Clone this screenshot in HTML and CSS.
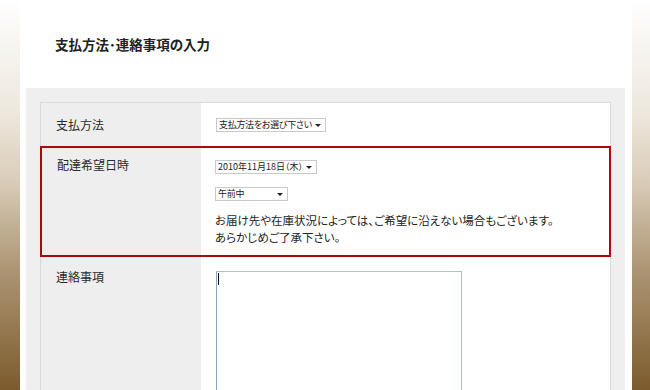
FILE: index.html
```html
<!DOCTYPE html>
<html lang="ja">
<head>
<meta charset="utf-8">
<title>支払方法・連絡事項の入力</title>
<link rel="stylesheet" href="styles.css">
</head>
<body>
<div class="page">
  <div class="strip strip-left"></div>
  <main class="main">
    <header class="head">
      <h1 class="title">支払方法･連絡事項の入力</h1>
    </header>
    <section class="panel">
      <div class="form">
        <div class="row row-first">
          <div class="label">支払方法</div>
          <div class="value">
            <span class="select sel-pay">支払方法をお選び下さい<i class="arrow"></i></span>
          </div>
        </div>
        <div class="row row-alert">
          <div class="label">配達希望日時</div>
          <div class="value">
            <span class="select sel-date">2010年11月18日（木）<i class="arrow"></i></span>
            <span class="select sel-time">午前中<i class="arrow"></i></span>
            <p class="note">お届け先や在庫状況によっては、ご希望に沿えない場合もございます。<br>あらかじめご了承下さい。</p>
          </div>
        </div>
        <div class="row row-last">
          <div class="label">連絡事項</div>
          <div class="value">
            <div class="textarea"><span class="caret"></span></div>
          </div>
        </div>
      </div>
    </section>
  </main>
  <div class="strip strip-right"></div>
</div>
</body>
</html>
```
FILE: styles.css
```css
html, body {
  margin: 0;
  padding: 0;
  background: #fff;
}
body {
  font-family: "Noto Sans CJK JP", "Noto Sans", sans-serif;
  color: #333;
  height: 390px;
  overflow: hidden;
}
.page {
  display: flex;
  width: 650px;
  min-height: 390px;
}
.strip {
  flex: none;
  min-height: 390px;
}
.strip-left {
  width: 20px;
  background: linear-gradient(to bottom, #ffffff 0px, #f8f6f2 40px, #eee8de 110px, #dacdb9 180px, #ad9573 270px, #7c5b2d 390px);
}
.strip-right {
  width: 18px;
  background: linear-gradient(to bottom, #ffffff 0px, #f8f6f2 40px, #eee8de 110px, #dacdb9 180px, #ad9573 270px, #7c5b2d 390px);
}
.main {
  flex: 1;
  padding: 0 7px 0 6px;
}
.head {
  height: 88px;
  display: flex;
  align-items: flex-start;
}
.title {
  margin: 34px 0 0 29px;
  font-size: 13.5px;
  line-height: 20px;
  font-weight: bold;
  color: #222;
  font-feature-settings: "palt";
}
.panel {
  background: #efefef;
  padding: 14px 14px 0 14px;
  height: 400px;
}
.form {
  background: #fff;
  border: 1px solid #dadada;
  border-bottom: none;
  height: 400px;
}
.row {
  display: grid;
  grid-template-columns: 160px 1fr;
}
.label {
  background: #eeeeee;
  padding-left: 15px;
  font-size: 12px;
  line-height: 16px;
  color: #2a2a2a;
}
.value {
  padding-left: 15px;
}
.row-first {
  height: 43px;
}
.row-first .label {
  padding-top: 14px;
}
.row-first .value {
  padding-top: 15px;
}
.row-alert {
  border: 2px solid #aa0a0a;
  margin: 0 -1px;
  grid-template-columns: 159px 1fr;
}
.row-alert .label {
  padding-top: 9px;
}
.row-alert .value {
  padding-top: 12px;
  padding-bottom: 9px;
  padding-left: 14px;
}
.row-last .label {
  padding-top: 12px;
  height: 300px;
}
.row-last .value {
  padding-top: 14px;
}
.select {
  display: flex;
  align-items: center;
  box-sizing: border-box;
  height: 14px;
  border: 1px solid #c9c9c9;
  background: #fff;
  font-size: 9px;
  line-height: 12px;
  letter-spacing: -0.3px;
  color: #222;
  padding: 0 0 0 2px;
  position: relative;
  font-feature-settings: "palt";
  white-space: nowrap;
}
.arrow {
  position: absolute;
  right: 4px;
  top: 5px;
  width: 0;
  height: 0;
  border-left: 3px solid transparent;
  border-right: 3px solid transparent;
  border-top: 3px solid #222;
}
.sel-pay { width: 110px; }
.sel-date {
  width: 102px;
  letter-spacing: 0;
}
.sel-time { width: 73px; margin-top: 13px; }
.note {
  margin: 11px 0 0 0;
  font-size: 11.5px;
  line-height: 17px;
  color: #222;
  font-feature-settings: "palt";
}
.textarea {
  box-sizing: border-box;
  width: 246px;
  height: 160px;
  border: 1px solid #a9c0d8;
  border-left-color: #8ea6bf;
  background: #fff;
  padding: 1px 0 0 1px;
}
.caret {
  display: block;
  width: 1px;
  height: 12px;
  background: #111;
}
```
